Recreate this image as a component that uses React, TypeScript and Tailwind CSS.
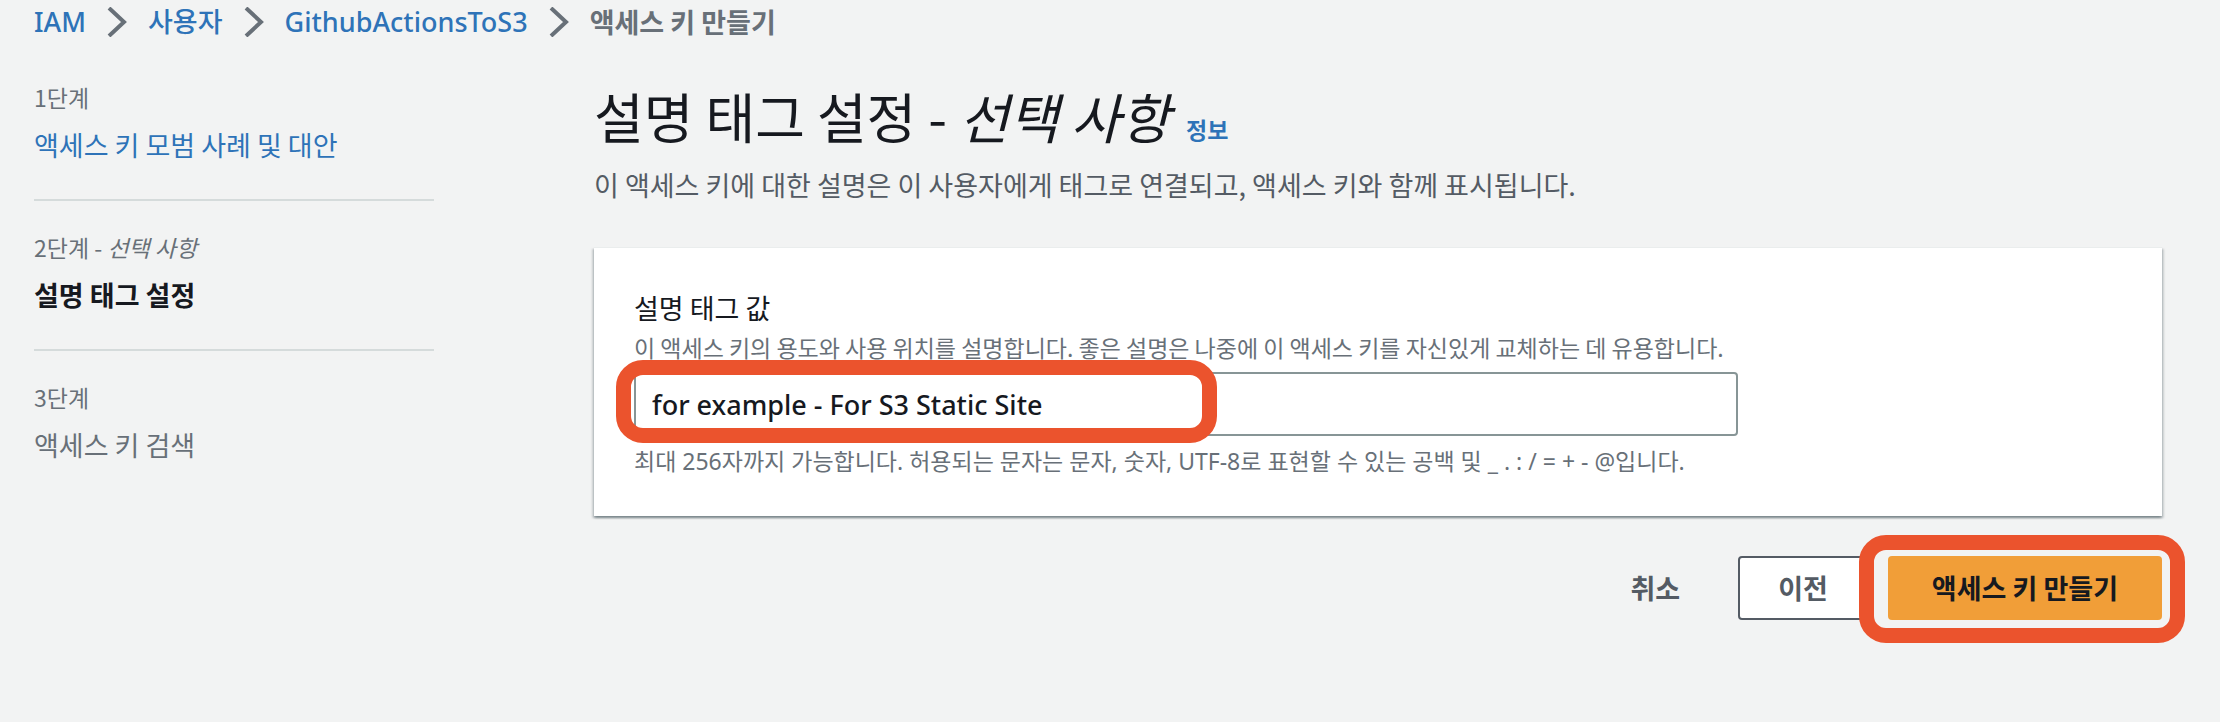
import { Fragment } from "react";

const trail = ["IAM", "사용자", "GithubActionsToS3"];

function Chevron() {
  return (
    <svg className="h-[30px] w-5 shrink-0" viewBox="0 0 20 30" fill="none" stroke="#687078" strokeWidth="4" aria-hidden="true">
      <path d="M2 1 L17 15 L2 29" />
    </svg>
  );
}

export default function App() {
  return (
    <div className="min-h-screen bg-[#f2f3f3] px-[34px] pb-10 font-['Noto_Sans_CJK_KR',sans-serif] text-[27px] leading-[44px] text-[#16191f]">
      <nav aria-label="탐색 경로" className="leading-[42px]">
        <ol className="flex items-center gap-[21px]">
          {trail.map((name) => (
            <Fragment key={name}>
              <li>
                <a href="#" className="font-['Noto_Sans','Noto_Sans_CJK_KR',sans-serif] font-medium text-[#2e73b8]">{name}</a>
              </li>
              <Chevron />
            </Fragment>
          ))}
          <li className="font-bold text-[#687078]" aria-current="page">액세스 키 만들기</li>
        </ol>
      </nav>

      <div className="flex gap-40 pt-8">
        <ol className="w-[400px] shrink-0 divide-y-2 divide-[#d5dbdb] text-[#687078]">
          <li className="h-[126px]">
            <div className="text-[23px]">1단계</div>
            <a href="#" className="block pt-1 text-[#2e73b8]">액세스 키 모범 사례 및 대안</a>
          </li>
          <li className="h-[150px] pt-6">
            <div className="text-[23px]">
              2단계 - <em>선택 사항</em>
            </div>
            <div className="pt-1 font-bold text-[#16191f]">설명 태그 설정</div>
          </li>
          <li className="pt-6">
            <div className="text-[23px]">3단계</div>
            <div className="pt-1">액세스 키 검색</div>
          </li>
        </ol>

        <main className="mr-6 min-w-0 grow">
          <div className="flex items-baseline gap-4">
            <h1 className="text-[54px] leading-[82px]">
              설명 태그 설정 - <em>선택 사항</em>
            </h1>
            <a href="#" className="text-[23px] font-bold text-[#2e73b8]">정보</a>
          </div>
          <p className="pt-1.5 text-[#545b64]">
            이 액세스 키에 대한 설명은 이 사용자에게 태그로 연결되고, 액세스 키와 함께 표시됩니다.
          </p>

          <section className="mt-10 border-t border-[#eaeded] bg-white px-10 pt-[38px] pb-[38px] shadow-[0_2px_2px_rgba(0,28,36,0.3),2px_2px_2px_rgba(0,28,36,0.15),-2px_2px_2px_rgba(0,28,36,0.15)]">
            <label htmlFor="tag" className="block">설명 태그 값</label>
            <p id="tag-hint" className="pb-2 text-[23px] leading-[34px] text-[#687078]">
              이 액세스 키의 용도와 사용 위치를 설명합니다. 좋은 설명은 나중에 이 액세스 키를 자신있게 교체하는 데 유용합니다.
            </p>
            <div className="relative max-w-[1104px]">
              <input
                id="tag"
                type="text"
                aria-describedby="tag-hint tag-limit"
                defaultValue="for example - For S3 Static Site"
                className="block h-16 w-full rounded-[4px] border-2 border-[#879596] bg-white px-4 font-['Noto_Sans','Noto_Sans_CJK_KR',sans-serif] font-medium"
              />
              <div className="pointer-events-none absolute -top-3 -left-[18px] h-[83px] w-[601px] rounded-[27px] border-[15px] border-[#eb532d]" />
            </div>
            <p id="tag-limit" className="pt-2 font-['Noto_Sans','Noto_Sans_CJK_KR',sans-serif] text-[23px] leading-[34px] text-[#687078]">
              최대 256자까지 가능합니다. 허용되는 문자는 문자, 숫자, UTF-8로 표현할 수 있는 공백 및 _ . : / = + - @입니다.
            </p>
          </section>

          <div className="flex justify-end gap-5 pt-10 font-bold">
            <button type="button" className="h-16 px-[38px] text-[#545b64]">취소</button>
            <button type="button" className="h-16 rounded-[4px] border-2 border-[#545b64] bg-white px-[38px] text-[#545b64]">이전</button>
            <div className="relative">
              <button type="button" className="h-16 rounded-[4px] bg-[#f19e38] px-11">액세스 키 만들기</button>
              <div className="pointer-events-none absolute -top-[21px] -right-[23px] -bottom-[23px] -left-[29px] rounded-[27px] border-[15px] border-[#eb532d]" />
            </div>
          </div>
        </main>
      </div>
    </div>
  );
}
